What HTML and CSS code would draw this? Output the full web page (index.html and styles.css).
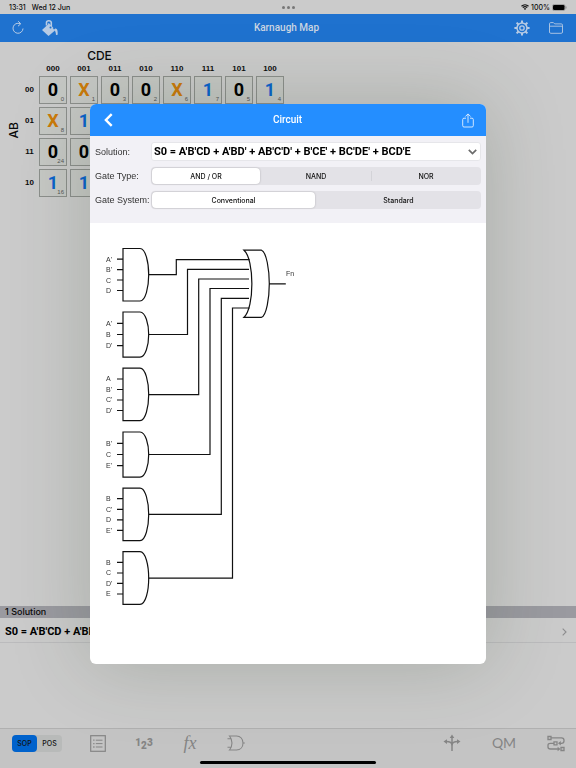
FILE: index.html
```html
<!DOCTYPE html>
<html lang="en">
<head>
<meta charset="utf-8">
<meta name="viewport" content="width=device-width, initial-scale=1">
<title>Karnaugh Map</title>
<link rel="stylesheet" href="styles.css">
</head>
<body>
<div class="app">
  <div class="status">
    <div class="status-left"><span>13:31</span><span>Wed 12 Jun</span></div>
    <div class="dots"><i></i><i></i><i></i></div>
    <div class="status-right">
      <svg width="8" height="6" viewBox="0 0 16 12" fill="none" stroke="#111" stroke-width="2.4"><path d="M1 4.5C5 .6 11 .6 15 4.5M3.6 7.3c2.6-2.3 6.200-2.300 8.800 0"/><path d="M8 12 5.500 9.300c1.500-1.200 3.500-1.200 5 0z" fill="#111" stroke="none"/></svg>
      <span>100%</span>
      <svg width="15" height="7" viewBox="0 0 15 7"><rect x=".4" y=".4" width="12.700" height="6.200" rx="2" fill="none" stroke="#888" stroke-width=".7"/><rect x="1" y="1" width="11.500" height="5" rx="1.300" fill="#000"/><path d="M14 2.500v2" stroke="#888"/></svg>
    </div>
  </div>

  <header class="nav">
    <div class="nav-group">
      <button class="icon" aria-label="Reset"><svg width="16" height="18" viewBox="0 0 16 18" fill="none" stroke="currentColor" stroke-width="1"><path d="M10 4.700A5 5 0 1 0 13 9.500M8.200 2.200l2.600 2.600-2.800 2.400"/></svg></button>
      <button class="icon" aria-label="Fill"><svg width="18" height="18" viewBox="0 0 18 18"><path d="M1 11 7.500 5l6.500 6.500-6.500 5.500z" fill="currentColor"/><path d="M14.300 9.500c2 0 2.600 2 2.400 6.200l-1.700.300c-.2-2.800-.6-4.200-2.200-5.200z" fill="currentColor"/><path d="M5.500 6.500V3.500C5.500 1.200 10 1 10.300 3.500V9" fill="none" stroke="currentColor" stroke-width="1.600"/><path d="M7.300 4.500 12 9.500" stroke="currentColor" stroke-width="1.300"/><circle cx="9.500" cy="8.500" r="1" fill="#1f72cf"/></svg></button>
    </div>
    <h1>Karnaugh Map</h1>
    <div class="nav-group nav-end">
      <button class="icon" aria-label="Settings"><svg width="16" height="16" viewBox="0 0 16 16" fill="none" stroke="currentColor"><circle cx="8" cy="8" r="5" stroke-width="1.500"/><circle cx="8" cy="8" r="2.200" stroke-width="1.300"/><path d="M8 .4v2.600M8 13v2.600M.4 8H3M13 8h2.600M2.600 2.600l1.900 1.900M11.500 11.500l1.900 1.900M2.600 13.400l1.900-1.900M11.500 4.500l1.900-1.900" stroke-width="2"/></svg></button>
      <button class="icon" aria-label="Open"><svg width="14" height="12" viewBox="0 0 14 12" fill="none" stroke="currentColor" stroke-width=".9"><path d="M.5 10V1.800Q.5.600 1.700.600H4.400L5.700 1.900H12.200Q13.500 1.900 13.500 3.200V10Q13.500 11.300 12.200 11.300H1.800Q.5 11.300.5 10zM.5 4.200H13.500"/></svg></button>
    </div>
  </header>

  <main class="map">
    <table class="kmap">
      <tbody>
      <tr><td></td><td></td><th class="var" colspan="4">CDE</th></tr>
      <tr><td></td><td></td><th>000</th><th>001</th><th>011</th><th>010</th><th>110</th><th>111</th><th>101</th><th>100</th></tr>
      <tr><th class="var side" rowspan="4"><span>AB</span></th><th class="row">00</th>
        <td class="cell">0<sub>0</sub></td><td class="cell dc">X<sub>1</sub></td><td class="cell">0<sub>3</sub></td><td class="cell">0<sub>2</sub></td><td class="cell dc">X<sub>6</sub></td><td class="cell one">1<sub>7</sub></td><td class="cell">0<sub>5</sub></td><td class="cell one">1<sub>4</sub></td></tr>
      <tr><th class="row">01</th><td class="cell dc">X<sub>8</sub></td><td class="cell one">1</td></tr>
      <tr><th class="row">11</th><td class="cell">0<sub>24</sub></td><td class="cell">0</td></tr>
      <tr><th class="row">10</th><td class="cell one">1<sub>16</sub></td><td class="cell one">1</td></tr>
      </tbody>
    </table>
  </main>

  <section class="solutions">
    <h2>1 Solution</h2>
    <a class="solution" href="#"><span>S0 = A'B'CD + A'BD'</span>
      <svg width="5" height="8" viewBox="0 0 5 8" fill="none" stroke="#8c8c8e" stroke-width="1.100"><path d="M.7.700 4 4 .7 7.300"/></svg></a>
  </section>

  <footer class="toolbar">
    <div class="tools">
      <div class="form-switch">
        <label><input type="radio" name="form" checked><span>SOP</span></label>
        <label><input type="radio" name="form"><span>POS</span></label>
      </div>
      <div class="tools-left">
        <button class="icon" aria-label="Truth table"><svg width="16" height="17" viewBox="0 0 16 17" fill="none" stroke="currentColor"><rect x=".7" y=".7" width="14.600" height="15.600" stroke-width="1.200"/><path d="M5.800 5.200H12.500M5.800 8.600H12.500M5.800 12H12.500" stroke-width="1"/><path d="M3.200 5.200h1.300M3.200 8.600h1.300M3.200 12h1.300" stroke-width="1.300"/></svg></button>
        <button class="icon digits" aria-label="Minterms"><span>1</span><span class="low">2</span><span>3</span></button>
        <button class="icon fx">fx</button>
        <button class="icon" aria-label="Circuit"><svg width="18" height="16" viewBox="0 0 18 16" fill="none" stroke="currentColor" stroke-width="1.100"><path d="M2.500 1H9.500C13.500 1 16 4 16 8S13.500 15 9.500 15H2.500C5.800 11 5.800 5 2.500 1zM.5 3.800H4M.5 12.200H4M16 8h1.800"/></svg></button>
      </div>
      <div class="tools-right">
        <button class="icon" aria-label="Split"><svg width="18" height="18" viewBox="0 0 18 18" fill="none" stroke="currentColor" stroke-width="1.500"><path d="M9 17V3M9 12C9 8.500 7 7.600 3 7.600M9 12c0-3.500 2-4.400 6-4.400"/><path d="M9 .5 11.300 4H6.700zM.5 7.600 4 5.300v4.600zM17.500 7.600 14 5.300v4.600z" fill="currentColor" stroke="none"/></svg></button>
        <button class="icon qm">QM</button>
        <button class="icon" aria-label="Flow"><svg width="18" height="17" viewBox="0 0 18 17" fill="none" stroke="currentColor" stroke-width="1.300"><path d="M1 1.500h3v3H1zM7 6.800h3v3H7zM14 12.500h3v3h-3zM4 2.800H14.500Q17 2.800 17 5.200V6Q17 8.300 14.500 8.300H12M7 8.300H3.500Q1 8.300 1 10.300V12Q1 14 3.500 14H11"/><path d="M11 8.300 13.800 6v4.600zM13.500 14 10.600 11.700v4.600z" fill="currentColor" stroke="none"/></svg></button>
      </div>
    </div>
    <div class="home"></div>
  </footer>
</div>

<div class="overlay">
  <section class="modal" role="dialog" aria-labelledby="modal-title">
    <header class="modal-bar">
      <button class="icon" aria-label="Back"><svg width="9" height="14" viewBox="0 0 9 14" fill="none" stroke="#fff" stroke-width="2.400"><path d="M7.700 1.200 1.900 7l5.800 5.800"/></svg></button>
      <h2 id="modal-title">Circuit</h2>
      <button class="icon" aria-label="Share"><svg width="12" height="15" viewBox="0 0 12 15" fill="none" stroke="#e3f1ff" stroke-width=".9"><path d="M4 5.200H2Q.7 5.200.7 6.500V12.700Q.7 14 2 14H10Q11.300 14 11.300 12.700V6.500Q11.300 5.200 10 5.200H8M6 9.800V1M3.400 3.500 6 .9 8.600 3.500"/></svg></button>
    </header>
    <form class="options">
      <label for="solution">Solution:</label>
      <div class="select">
        <select id="solution"><option>S0 = A'B'CD + A'BD' + AB'C'D' + B'CE' + BC'DE' + BCD'E</option></select>
        <svg width="9" height="6" viewBox="0 0 9 6" fill="none" stroke="#6b6b6b" stroke-width="1.700"><path d="M.8.800 4.500 4.600 8.200.800"/></svg>
      </div>
      <span id="gate-type">Gate Type:</span>
      <div class="segments" role="radiogroup" aria-labelledby="gate-type">
        <label><input type="radio" name="type" checked><span>AND / OR</span></label>
        <label><input type="radio" name="type"><span>NAND</span></label>
        <label class="divided"><input type="radio" name="type"><span>NOR</span></label>
      </div>
      <span id="gate-system">Gate System:</span>
      <div class="segments" role="radiogroup" aria-labelledby="gate-system">
        <label><input type="radio" name="system" checked><span>Conventional</span></label>
        <label><input type="radio" name="system"><span>Standard</span></label>
      </div>
    </form>
    <svg class="circuit" viewBox="0 0 396 441" role="img" aria-label="Logic circuit">
      <!-- AND gates -->
      <path d="M33 25.500H50C55.500 25.500 58.700 39 58.700 51.700S55.500 78 50 78H33z"/>
      <path d="M33 89H50C55.500 89 58.700 101 58.700 111.500S55.500 134.200 50 134.200H33z"/>
      <path d="M33 145.200H50C55.500 145.200 58.700 159 58.700 171.500S55.500 197.700 50 197.700H33z"/>
      <path d="M33 209H50C55.500 209 58.700 221 58.700 231.500S55.500 254.200 50 254.200H33z"/>
      <path d="M33 265.200H50C55.500 265.200 58.700 279 58.700 291.500S55.500 317.700 50 317.700H33z"/>
      <path d="M33 328.700H50C55.500 328.700 58.700 342 58.700 355.200S55.500 381.300 50 381.300H33z"/>
      <!-- input pins -->
      <path class="pins" d="M27 36.200h6M27 46.600h6M27 57h6M27 67.500h6M27 100.300h6M27 111.500h6M27 122.700h6M27 156h6M27 166.500h6M27 177h6M27 187.500h6M27 220.300h6M27 231.500h6M27 242.700h6M27 275.700h6M27 286.300h6M27 296.800h6M27 307.300h6M27 339.300h6M27 350h6M27 360.400h6M27 371h6"/>
      <!-- wires to the OR gate -->
      <path d="M58.700 51.700H86.300V36.600H159.500M58.700 111.500H97.500V46.400H159M58.700 171.600H108.700V56H159M58.700 231.500H120V65.500H159M58.700 291.400H131.300V75.300H159M58.700 355.200H142.500V85H159.500"/>
      <!-- OR gate -->
      <path d="M154 27.200H171.500C176.500 29 179.300 47 179.300 60.800S176.500 92.500 171.500 94.300H154C164.500 85 164.500 36.500 154 27.200zM179.300 60.800h16.500"/>
      <g>
        <text x="16" y="39">A'</text><text x="16" y="49">B'</text><text x="16" y="60">C</text><text x="16" y="70">D</text>
        <text x="16" y="103">A'</text><text x="16" y="114">B</text><text x="16" y="125">D'</text>
        <text x="16" y="158">A</text><text x="16" y="169">B'</text><text x="16" y="179">C'</text><text x="16" y="190">D'</text>
        <text x="16" y="223">B'</text><text x="16" y="234">C</text><text x="16" y="245">E'</text>
        <text x="16" y="278">B</text><text x="16" y="289">C'</text><text x="16" y="299">D</text><text x="16" y="310">E'</text>
        <text x="16" y="342">B</text><text x="16" y="352">C</text><text x="16" y="363">D'</text><text x="16" y="373">E</text>
        <text x="196" y="53">Fn</text>
      </g>
    </svg>
  </section>
</div>
</body>
</html>
```
FILE: styles.css
```css
* { box-sizing: border-box; }
body { margin: 0; font-family: "Liberation Sans", Arial, sans-serif; color: #0b0b0b; background: #cbcbcb; }
h1, h2 { margin: 0; }
button { border: 0; padding: 0; background: none; color: inherit; font: inherit; }
svg { display: block; flex: none; }

.app { min-height: 100vh; display: flex; flex-direction: column; }

.status { height: 14px; padding: 0 9px; display: grid; grid-template-columns: 1fr auto 1fr; align-items: center; font: 500 7px Inter, sans-serif; }
.status-left, .status-right { display: flex; align-items: center; }
.status-left { gap: 6px; }
.status-right { justify-content: flex-end; gap: 2px; }
.dots { display: flex; gap: 2px; }
.dots i { width: 3px; height: 3px; border-radius: 50%; background: #777; }

.nav { height: 28px; padding: 0 13px 0 10px; display: grid; grid-template-columns: 1fr auto 1fr; align-items: center; background: #1f72cf; color: #b7cbe4; }
.nav h1 { font: 500 10px/14px Roboto, sans-serif; color: #ccd6e2; }
.nav-group { display: flex; align-items: center; gap: 15px; }
.nav-end { justify-content: flex-end; gap: 19px; }

.icon { display: flex; align-items: center; justify-content: center; }

.map { flex: 1; padding: 5px; }
.kmap { border-spacing: 3px; }
.kmap th, .kmap td { padding: 0; }
.kmap th { font: 700 8px/8px "Liberation Sans", sans-serif; }
.kmap .var { font: 500 12px/12px Inter, sans-serif; }
.kmap .side { width: 12px; padding-bottom: 12px; }
.side span { display: block; writing-mode: vertical-rl; transform: rotate(180deg); }
.kmap .row { width: 13px; }
.kmap .cell { position: relative; width: 28px; height: 28px; border: 1px solid #8c8f8c; background: #c6c8c5; text-align: center; font: 700 18px/24px Roboto, sans-serif; color: #000; }
.kmap .dc { color: #cb7a0a; }
.kmap .one { color: #0a62cc; }
.cell sub { position: absolute; right: 2px; bottom: 1px; font: 400 6px/6px "Liberation Sans", sans-serif; color: #555; }

.solutions { min-height: 122px; }
.solutions h2 { padding-left: 5px; font: 500 9px/12px Inter, sans-serif; background: #9a9aa0; }
.solution { margin-top: 1px; height: 24px; padding: 2px 9px 0 5px; display: flex; align-items: center; justify-content: space-between; color: #000; text-decoration: none; font: 700 11px Roboto, sans-serif; border-bottom: 1px solid #bbbbbd; }

.toolbar { height: 40px; border-top: 1px solid #b0b0b0; background: #c4c4c4; color: #858585; }
.tools { height: 28px; padding: 0 11px 0 12px; display: flex; align-items: center; }
.form-switch { display: flex; width: 50px; height: 17px; border-radius: 4px; background: #b8bab9; color: #111; }
.form-switch label { flex: 1; display: flex; }
.form-switch span { flex: 1; text-align: center; font: 500 7px/17px Inter, sans-serif; border-radius: 4px; }
.form-switch input, .segments input { position: absolute; opacity: 0; margin: 0; }
.form-switch input:checked + span { background: #0062cc; }
.tools-left, .tools-right { display: flex; align-items: center; }
.tools-left { margin-left: 27px; gap: 28px; }
.tools-left .icon { width: 18px; }
.tools-right { margin-left: auto; gap: 31px; }
.digits { font: 900 10px/10px Roboto, sans-serif; }
.digits .low { padding-top: 5px; }
.fx { font: italic 18px/20px "Liberation Serif", serif; }
.qm { width: 24px; font: 400 14px/20px Lato, sans-serif; }
.home { width: 176px; height: 3px; margin: 4px auto 0; border-radius: 2px; background: #000; }

.overlay { position: fixed; inset: 0; display: grid; place-items: center; }
.modal { width: 100%; max-width: 396px; border-radius: 6px; overflow: hidden; background: #fff; box-shadow: 0 0 80px rgba(40, 60, 30, .22); }
.modal-bar { height: 32px; padding: 0 12px 0 14px; display: flex; align-items: center; justify-content: space-between; background: #248eff; color: #fff; }
.modal-bar h2 { font: 500 10px/14px Roboto, sans-serif; }
.options { padding: 6px 5px 14px; display: grid; grid-template-columns: 56px 1fr; row-gap: 6px; align-items: center; background: #f2f1f6; font-size: 9px; line-height: 12px; color: #333; white-space: nowrap; }
.select { position: relative; }
.select select { display: block; width: 100%; height: 19px; padding: 0 2px; border: 1px solid #e6e6ea; border-radius: 3px; background: #fff; appearance: none; color: #000; font: 700 11px Roboto, sans-serif; }
.select svg { position: absolute; right: 4px; top: 7px; }
.segments { display: flex; height: 18px; border-radius: 4px; background: #e3e2e7; color: #111; }
.segments label { flex: 1; display: flex; padding: 1px; }
.segments span { flex: 1; text-align: center; font: 500 7px/17px Inter, sans-serif; border-radius: 4px; }
.segments input:checked + span { background: #fff; box-shadow: 0 0 2px rgba(0, 0, 0, .25); }
.segments .divided { background: linear-gradient(#d3d3d8, #d3d3d8) left center / 1px 10px no-repeat; }
.circuit { width: 100%; height: auto; fill: none; stroke: #111; stroke-width: 1.2; }
.circuit text { fill: #333; stroke: none; font: 7px "Liberation Sans", sans-serif; }
```
